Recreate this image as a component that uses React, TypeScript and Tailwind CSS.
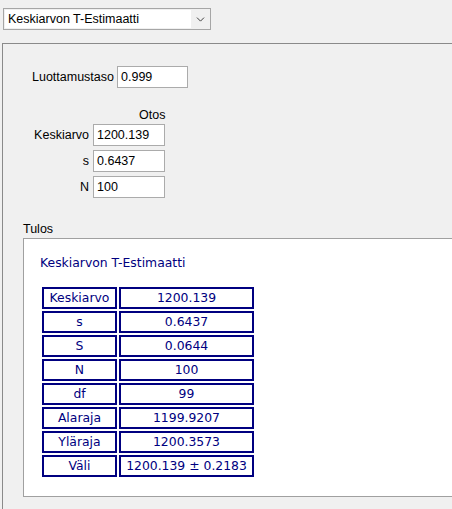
import { ChevronDown } from 'lucide-react'

const inputCls = "h-[22px] bg-white border border-[#ababab] flex items-center pl-[3px] text-black"

const otos = [
  { label: "Keskiarvo", value: "1200.139" },
  { label: "s", value: "0.6437" },
  { label: "N", value: "100" },
]

const results = [
  ["Keskiarvo", "1200.139"],
  ["s", "0.6437"],
  ["S", "0.0644"],
  ["N", "100"],
  ["df", "99"],
  ["Alaraja", "1199.9207"],
  ["Yläraja", "1200.3573"],
  ["Väli", "1200.139 ± 0.2183"],
]

export default function App() {
  return (
    <div className="w-[452px] h-[509px] bg-[#f0f0f0] overflow-hidden flex flex-col font-['Liberation_Sans',Arial,sans-serif] text-[12.5px] text-black">
      {/* Estimaattori valinta */}
      <div className="mt-[8px] ml-[3px] w-[208px] h-[22px] border border-[#a6a6a6] p-[1px] flex shrink-0">
        <div className="flex-1 bg-white flex items-center pl-[3px]">Keskiarvon T-Estimaatti</div>
        <div className="w-[18px] flex items-center justify-center text-[#3c3c3c]">
          <ChevronDown size={13} strokeWidth={1.8} />
        </div>
      </div>

      {/* Pääpaneeli */}
      <div className="mt-[13px] ml-[2px] flex-1 border-t border-l border-[#8a8a8a] flex flex-col">
        <div className="mt-[22px] ml-[29px] flex items-center">
          <span>Luottamustaso</span>
          <div className={`${inputCls} ml-[3px] w-[71px]`}>0.999</div>
        </div>

        <div className="mt-[20px] ml-[136px] leading-[14px]">Otos</div>

        <div className="mt-[2px] flex flex-col gap-[4px]">
          {otos.map((row) => (
            <div key={row.label} className="flex items-center">
              <span className="w-[86px] text-right">{row.label}</span>
              <div className={`${inputCls} ml-[4px] w-[72px]`}>{row.value}</div>
            </div>
          ))}
        </div>

        {/* Tulos */}
        <div className="mt-[24px] ml-[20px] leading-[14px]">Tulos</div>
        <div className="mt-[2px] ml-[20px] w-[440px] h-[259px] bg-white border border-[#a0a0a0] border-r-0 shrink-0">
          <div className="mt-[17px] ml-[16px] text-[#000080] font-['DejaVu_Sans',sans-serif] text-[12.4px] leading-[14px]">
            Keskiarvon T-Estimaatti
          </div>
          <div className="mt-[17px] ml-[18px] flex flex-col gap-[2px] font-['DejaVu_Sans',sans-serif] text-[12.4px] text-[#000080]">
            {results.map(([k, v]) => (
              <div key={k} className="flex gap-[2px]">
                <div className="w-[75px] h-[22px] border-2 border-[#000080] flex items-center justify-center">{k}</div>
                <div className="w-[135px] h-[22px] border-2 border-[#000080] flex items-center justify-center">{v}</div>
              </div>
            ))}
          </div>
        </div>
      </div>
    </div>
  )
}
